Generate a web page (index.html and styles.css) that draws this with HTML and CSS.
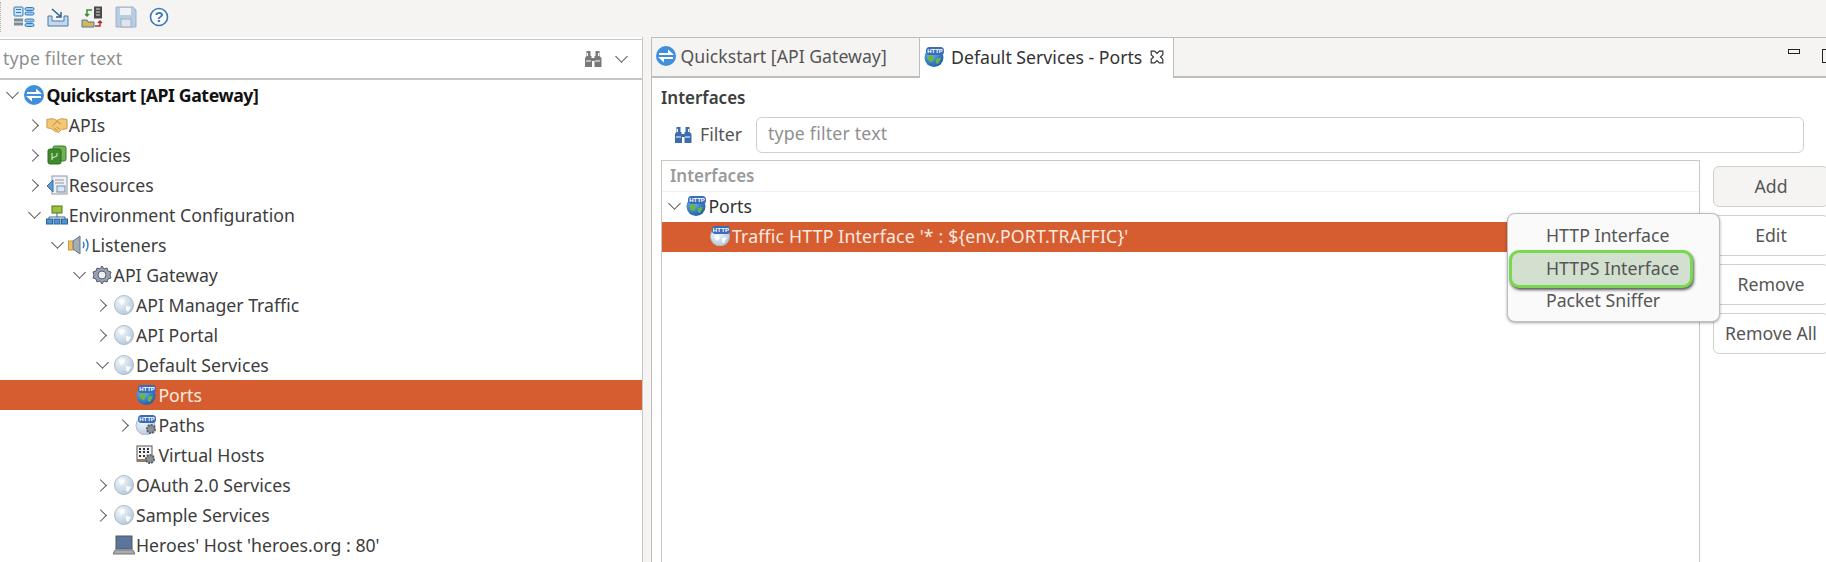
FILE: index.html
```html
<!DOCTYPE html>
<html lang="en">
<head>
    <meta charset="UTF-8">
    <title>Policy Studio - Default Services - Ports</title>
    <link rel="stylesheet" href="styles.css">
</head>
<body>
<svg class="sprites" width="0" height="0">
    <defs>
        <radialGradient id="gGrey" cx="35%" cy="30%" r="75%">
            <stop offset="0" stop-color="#f4f8fb"/>
            <stop offset="1" stop-color="#b4c8dc"/>
        </radialGradient>
        <radialGradient id="gBlue" cx="35%" cy="30%" r="75%">
            <stop offset="0" stop-color="#6cb8ee"/>
            <stop offset="1" stop-color="#1b5fa8"/>
        </radialGradient>
        <symbol id="i-qs" viewBox="0 0 20 20">
            <circle cx="10" cy="10" r="10" fill="#3f8fdc"/>
            <path d="M3 8h10M6.500 12H17" stroke="#fff" stroke-width="2"/>
            <path d="M12 3.500L18 9h-6zM8 16.500L2 11h6z" fill="#fff"/>
        </symbol>
        <symbol id="i-apis" viewBox="0 0 24 20">
            <path d="M1 4l6-1 5 2 5-2 6 1v10l-6 1-3 3-4-1-4-3-5-1z" fill="#f3c774" stroke="#c9963e"/>
            <path d="M7 11l5-5 4 3M9 13l3 3M12 12l3 3" fill="none" stroke="#b47f2c"/>
        </symbol>
        <symbol id="i-policies" viewBox="0 0 20 20">
            <rect x="6" y="1" width="13" height="15" rx="2" fill="#6cb356" stroke="#3b7f2b"/>
            <rect x="1" y="4" width="13" height="15" rx="2" fill="#3f8a2c" stroke="#2c6a1c"/>
            <path d="M5 8v7M10 8v3l-5 2" fill="none" stroke="#dff2d4"/>
        </symbol>
        <symbol id="i-resources" viewBox="0 0 22 20">
            <rect x="6" y="1" width="15" height="18" fill="#eef1f5" stroke="#8f98a3"/>
            <path d="M9 5h9M9 8h9" stroke="#8f98a3"/>
            <rect x="11" y="11" width="8" height="6" fill="#dbe7f3" stroke="#6f8fb3"/>
            <path d="M7 5L1 11l6 6z" fill="#5d9ad6" stroke="#3a6fa8"/>
        </symbol>
        <symbol id="i-env" viewBox="0 0 22 20">
            <rect x="6" y="1" width="10" height="7" fill="#9ac23c" stroke="#4f7a1d"/>
            <path d="M11 8v4M3 14v-2h16v2" fill="none" stroke="#39648f"/>
            <rect x="0.500" y="14" width="6" height="5" fill="#4f94d0" stroke="#2c6298"/>
            <rect x="8" y="14" width="6" height="5" fill="#4f94d0" stroke="#2c6298"/>
            <rect x="15.500" y="14" width="6" height="5" fill="#4f94d0" stroke="#2c6298"/>
        </symbol>
        <symbol id="i-listeners" viewBox="0 0 22 20">
            <rect x="0.500" y="6" width="5" height="9" fill="#f0c060" stroke="#c89a3c"/>
            <path d="M5 6l7-5v18l-7-5z" fill="#a4acb6" stroke="#687480"/>
            <path d="M15 7q2 3 0 6M18 4q4 6 0 12" fill="none" stroke="#3f7fc0" stroke-width="1.5"/>
        </symbol>
        <symbol id="i-gear" viewBox="0 0 20 20">
            <path d="M10 1l2 3 3-1 1 3 3 1-1 3 1 3-3 1-1 3-3-1-2 3-2-3-3 1-1-3-3-1 1-3-1-3 3-1 1-3 3 1z" fill="#98a0b4" stroke="#555c6c"/>
            <circle cx="10" cy="10" r="4" fill="#eef0f4" stroke="#555c6c"/>
        </symbol>
        <symbol id="i-globe" viewBox="0 0 20 20">
            <circle cx="10" cy="10" r="9.500" fill="url(#gGrey)" stroke="#aebccb"/>
            <path d="M5 5l5-1 1 3-4 3zM12 11l5 1-3 5-2-2z" fill="#fff"/>
        </symbol>
        <symbol id="i-http" viewBox="0 0 22 20">
            <circle cx="11" cy="10.500" r="9.500" fill="url(#gBlue)"/>
            <path d="M4 10l5-2 2 3-2 4-3-1zM13 12l5-1-3 6-2-1z" fill="#6fb53c"/>
            <rect x="3" y="0" width="18" height="8" rx="3.500" fill="#3a6db8"/>
            <text x="12" y="6.400" class="badge">HTTP</text>
        </symbol>
        <symbol id="i-http-grey" viewBox="0 0 22 20">
            <circle cx="11" cy="10.500" r="9.500" fill="url(#gGrey)" stroke="#aebccb"/>
            <path d="M5 11l4-2 2 3-3 3zM13 12l5-1-3 6-2-1z" fill="#fff"/>
            <rect x="3" y="0" width="18" height="8" rx="3.500" fill="#3a6db8"/>
            <text x="12" y="6.400" class="badge">HTTP</text>
        </symbol>
        <symbol id="i-paths" viewBox="0 0 22 20">
            <circle cx="10.500" cy="10.500" r="9.500" fill="url(#gGrey)" stroke="#aebccb"/>
            <rect x="3" y="0" width="18" height="8" rx="3.500" fill="#3a6db8"/>
            <text x="12" y="6.400" class="badge">HTTP</text>
            <circle cx="16" cy="14" r="4" fill="#8b9098" stroke="#5a5f66" stroke-width="2" stroke-dasharray="2 1"/>
        </symbol>
        <symbol id="i-vhosts" viewBox="0 0 20 20">
            <rect x="1" y="1" width="15" height="15" fill="#f4f4f4" stroke="#555"/>
            <path d="M3 4h2M7 4h2M11 4h2M3 7h2M7 7h2M11 7h2M3 11h2M7 11h2" stroke="#333" stroke-width="2"/>
            <rect x="1" y="14" width="10" height="3" fill="#8d8060"/>
            <circle cx="14" cy="14" r="4" fill="#8b9098" stroke="#5a5f66" stroke-width="2" stroke-dasharray="2 1"/>
        </symbol>
        <symbol id="i-host" viewBox="0 0 22 20">
            <rect x="3" y="1" width="16" height="13" fill="#5a769f" stroke="#555"/>
            <path d="M0 19l2-4h18l2 4z" fill="#a8acb0" stroke="#777"/>
        </symbol>
        <symbol id="i-bino" viewBox="0 0 20 18">
            <path d="M3.500 1h4v5h1v2h3V6h1V1h4v5l2 2v9h-7V11H9v6H2V8l1.500-2z" fill="currentColor"/>
            <path d="M3 11h5M12 11h5M4.500 3v3M15.500 3v3" stroke="#fff"/>
        </symbol>
    </defs>
</svg>

<div id="toolbar">
    <span class="grip"></span>
    <svg class="tool" width="22" height="22" viewBox="0 0 22 22">
        <rect x="1" y="1" width="9" height="9" rx="1" fill="#cfe2f5" stroke="#2f7fc0"/>
        <path d="M3 3.500h5M3 6.500h5" stroke="#2f7fc0"/>
        <rect x="12" y="1.500" width="9" height="3" rx="1.500" fill="#9cc8ec" stroke="#2f7fc0"/>
        <rect x="12" y="6" width="9" height="3" rx="1.500" fill="#9cc8ec" stroke="#2f7fc0"/>
        <path d="M1 14h9M1 18h9" stroke="#7d8c9a" stroke-width="3"/>
        <rect x="12" y="13" width="9" height="3" rx="1.500" fill="#9cc8ec" stroke="#2f7fc0"/>
        <rect x="12" y="17.500" width="9" height="3" rx="1.500" fill="#9cc8ec" stroke="#2f7fc0"/>
    </svg>
    <svg class="tool" width="22" height="22" viewBox="0 0 22 22">
        <path d="M1 10h4v5h12v-5h4v10H1z" fill="#c4d8ec" stroke="#4a78ab"/>
        <path d="M5 3l8 7M9 11h5V6" fill="none" stroke="#2f5f9a" stroke-width="1.5"/>
    </svg>
    <svg class="tool" width="22" height="22" viewBox="0 0 22 22">
        <rect x="13" y="0.500" width="8" height="12" fill="#4a4a4a"/>
        <path d="M15 3h4M15 6h4M15 9h4" stroke="#ddd"/>
        <path d="M1 14h5l1 2h6v5H1z" fill="#d9b650" stroke="#4a78ab"/>
        <path d="M11 4H6v6M4 8l2 2 2-2" fill="none" stroke="#3a8f2a" stroke-width="1.5"/>
        <path d="M14 20h5v-5M17 17l2-2 2 2" fill="none" stroke="#b03030" stroke-width="1.5"/>
    </svg>
    <svg class="tool" width="22" height="22" viewBox="0 0 22 22">
        <path d="M1 1h17l3 3v17H1z" fill="#b9cde2" stroke="#9fb2c6"/>
        <rect x="5" y="2" width="11" height="7" fill="#eef2f6"/>
        <rect x="6" y="13" width="10" height="8" fill="#dfe4ea" stroke="#9fb2c6"/>
    </svg>
    <svg class="tool" width="20" height="20" viewBox="0 0 20 20">
        <circle cx="10" cy="10" r="8.500" fill="#fff" stroke="#3c78b4" stroke-width="1.6"/>
        <text x="10" y="15" class="help">?</text>
    </svg>
</div>

<div id="workbench">
    <div id="navigator">
        <div id="search">
            <span class="placeholder">type filter text</span>
            <svg class="search-bino" width="20" height="18"><use href="#i-bino"/></svg>
            <span class="chev open search-chev"></span>
        </div>
        <ul id="tree">
            <li class="lvl0"><span class="chev open"></span><svg class="ico"><use href="#i-qs"/></svg><b>Quickstart [API Gateway]</b></li>
            <li class="lvl1"><span class="chev"></span><svg class="ico"><use href="#i-apis"/></svg>APIs</li>
            <li class="lvl1"><span class="chev"></span><svg class="ico"><use href="#i-policies"/></svg>Policies</li>
            <li class="lvl1"><span class="chev"></span><svg class="ico"><use href="#i-resources"/></svg>Resources</li>
            <li class="lvl1"><span class="chev open"></span><svg class="ico"><use href="#i-env"/></svg>Environment Configuration</li>
            <li class="lvl2"><span class="chev open"></span><svg class="ico"><use href="#i-listeners"/></svg>Listeners</li>
            <li class="lvl3"><span class="chev open"></span><svg class="ico"><use href="#i-gear"/></svg>API Gateway</li>
            <li class="lvl4"><span class="chev"></span><svg class="ico"><use href="#i-globe"/></svg>API Manager Traffic</li>
            <li class="lvl4"><span class="chev"></span><svg class="ico"><use href="#i-globe"/></svg>API Portal</li>
            <li class="lvl4"><span class="chev open"></span><svg class="ico"><use href="#i-globe"/></svg>Default Services</li>
            <li class="lvl5 selected"><span class="chev none"></span><svg class="ico"><use href="#i-http"/></svg>Ports</li>
            <li class="lvl5"><span class="chev"></span><svg class="ico"><use href="#i-paths"/></svg>Paths</li>
            <li class="lvl5"><span class="chev none"></span><svg class="ico"><use href="#i-vhosts"/></svg>Virtual Hosts</li>
            <li class="lvl4"><span class="chev"></span><svg class="ico"><use href="#i-globe"/></svg>OAuth 2.0 Services</li>
            <li class="lvl4"><span class="chev"></span><svg class="ico"><use href="#i-globe"/></svg>Sample Services</li>
            <li class="lvl4"><span class="chev none"></span><svg class="ico"><use href="#i-host"/></svg>Heroes' Host 'heroes.org : 80'</li>
        </ul>
    </div>

    <div id="editor">
        <div id="tabs">
            <div class="tab"><svg class="ico"><use href="#i-qs"/></svg>Quickstart [API Gateway]</div>
            <div class="tab active">
                <svg class="ico"><use href="#i-http"/></svg>Default Services - Ports
                <svg class="close" width="14" height="14" viewBox="0 0 12 12">
                    <path d="M1 1h3l2 2 2-2h3v3L9 6l2 2v3H8L6 9l-2 2H1V8l2-2-2-2z" fill="none" stroke="#333"/>
                </svg>
            </div>
            <div class="tab-actions">
                <span class="min"></span>
                <span class="max"></span>
            </div>
        </div>
        <div id="page">
            <h2>Interfaces</h2>
            <div id="filter">
                <svg class="filter-bino" width="20" height="18"><use href="#i-bino"/></svg>
                <span>Filter</span>
                <div class="input">type filter text</div>
            </div>
            <div id="body">
                <div id="table">
                    <div class="thead">Interfaces</div>
                    <div class="row"><span class="chev open"></span><svg class="ico"><use href="#i-http"/></svg>Ports</div>
                    <div class="row sub selected"><svg class="ico"><use href="#i-http-grey"/></svg>Traffic HTTP Interface '* : ${env.PORT.TRAFFIC}'</div>
                </div>
                <div id="buttons">
                    <button class="hover">Add</button>
                    <button>Edit</button>
                    <button>Remove</button>
                    <button>Remove All</button>
                </div>
            </div>
        </div>
    </div>
</div>

<ul id="menu">
    <li>HTTP Interface</li>
    <li class="current">HTTPS Interface</li>
    <li>Packet Sniffer</li>
</ul>
</body>
</html>
```

FILE: styles.css
```css
*{
    margin: 0;
    padding: 0;
    box-sizing: border-box;
}
ul{
    list-style: none;
}
html,body{
    height: 100%;
    overflow: hidden;
}
body{
    background-color: #f5f4f3;
    color: #3d3d3d;
    font-family: "Noto Sans", sans-serif;
    font-size: 17.7px;
    display: flex;
    flex-direction: column;
}
.sprites{
    position: absolute;
}
.badge{
    fill: #fff;
    font-family: "Liberation Sans", sans-serif;
    font-size: 6px;
    font-weight: bold;
    text-anchor: middle;
}
.help{
    fill: #3c78b4;
    font-family: "Liberation Sans", sans-serif;
    font-size: 15px;
    font-weight: bold;
    text-anchor: middle;
}

/* top toolbar */
#toolbar{
    height: 37px;
    flex: none;
    display: flex;
    align-items: center;
    gap: 12px;
    padding: 0 0 4px 0;
}
.grip{
    width: 1px;
    height: 30px;
    border-left: 1px dotted #b5b3ae;
}
.tool{
    flex: none;
}

/* chevrons are drawn from two borders */
.chev{
    flex: none;
    width: 22.4px;
    height: 20px;
    position: relative;
}
.chev::before{
    content: "";
    position: absolute;
    left: 5px;
    top: 6px;
    width: 8px;
    height: 8px;
    border-top: 1.5px solid #555;
    border-right: 1.5px solid #555;
    transform: rotate(45deg);
}
.chev.open::before{
    left: 7px;
    top: 3px;
    transform: rotate(135deg);
}
.chev.none::before{
    display: none;
}
.ico{
    flex: none;
    width: 22px;
    height: 20px;
    margin-right: 1px;
}

#workbench{
    flex: 1;
    min-height: 0;
    display: flex;
}

/* left side */
#navigator{
    width: 643px;
    flex: none;
    padding-top: 2px;
    display: flex;
    flex-direction: column;
    background-color: #fff;
    border-right: 1px solid #c8c8c6;
    box-shadow: 0 -2px 0 #f5f4f3;
}
#search{
    height: 41px;
    flex: none;
    display: flex;
    align-items: center;
    padding: 0 10px 0 3px;
    border-top: 1px solid #c8c8c6;
    border-bottom: 2px solid #c8c8c6;
}
.placeholder{
    flex: 1;
    padding-bottom: 2px;
    color: #8f8f8f;
    letter-spacing: 0.2px;
}
.search-bino{
    color: #77797a;
}
.search-chev{
    margin-left: 7px;
    width: 22px;
}
#tree li{
    height: 30px;
    display: flex;
    align-items: center;
    white-space: nowrap;
}
#tree b{
    color: #111;
    font-weight: 700;
    letter-spacing: -0.4px;
}
#tree .selected, #table .selected{
    background-color: #d65d30;
    color: #fbe9e0;
}
.lvl0{ padding-left: 1px; }
.lvl1{ padding-left: 23.4px; }
.lvl2{ padding-left: 45.8px; }
.lvl3{ padding-left: 68.2px; }
.lvl4{ padding-left: 90.6px; }
.lvl5{ padding-left: 113px; }

/* right side */
#editor{
    flex: 1;
    min-width: 0;
    margin-left: 8px;
    display: flex;
    flex-direction: column;
    border-left: 1px solid #bdbdbb;
    background-color: #fff;
}
#tabs{
    height: 41px;
    flex: none;
    display: flex;
    background-color: #f5f4f3;
    border-top: 1px solid #bdbdbb;
    border-bottom: 2px solid #bdbdbb;
}
.tab{
    width: 267px;
    display: flex;
    align-items: center;
    padding: 0 0 2px 3px;
    color: #555;
    white-space: nowrap;
    gap: 2.5px;
}
.tab.active{
    width: 255px;
    margin-bottom: -2px;
    padding: 0 0 2px 3px;
    gap: 5px;
    background-color: #fff;
    color: #333;
    border-left: 1px solid #bdbdbb;
    border-right: 1px solid #bdbdbb;
}
.close{
    margin-left: 3px;
}
.tab-actions{
    flex: 1;
    display: flex;
    justify-content: flex-end;
    gap: 22px;
    padding-top: 11px;
}
.min{
    width: 12px;
    height: 5px;
    border: 1.5px solid #222;
}
.max{
    width: 12px;
    height: 14px;
    margin-right: -8px;
    border: 1.5px solid #222;
}
#page{
    flex: 1;
    min-height: 0;
    display: flex;
    flex-direction: column;
    padding: 7px 22px 0 9px;
}
h2{
    height: 26px;
    font-size: 17px;
    font-weight: 600;
    line-height: 26px;
}
#filter{
    display: flex;
    align-items: center;
    height: 36px;
    margin-top: 6px;
    padding-left: 12px;
    color: #555;
}
#filter span{
    padding-bottom: 2px;
}
.filter-bino{
    color: #3c6cae;
    margin-right: 7px;
}
.input{
    flex: 1;
    height: 36px;
    margin-left: 14px;
    padding-left: 11px;
    line-height: 31px;
    color: #8f8f8f;
    letter-spacing: 0.2px;
    border: 1px solid #cfcfcd;
    border-radius: 6px;
}
#body{
    flex: 1;
    min-height: 0;
    display: flex;
    margin-top: 7px;
}
#table{
    width: 1039px;
    flex: none;
    border: 1px solid #c8c8c6;
    border-bottom: 0;
}
.thead{
    height: 31px;
    padding-left: 8px;
    font-size: 17px;
    line-height: 30px;
    color: #9a9a9a;
    font-weight: 600;
    border-bottom: 1px solid #f0f0f0;
}
.row{
    height: 30px;
    display: flex;
    align-items: center;
    padding: 0 0 2px 1px;
    color: #333;
    white-space: nowrap;
}
.row.sub{
    padding-left: 47px;
    letter-spacing: 0.17px;
}
#buttons{
    width: 116px;
    flex: none;
    margin: 6px -22px 0 13px;
    display: flex;
    flex-direction: column;
    gap: 8px;
}
#buttons button{
    width: 116px;
    height: 41px;
    padding-bottom: 2px;
    font: inherit;
    color: #555;
    background-color: #fff;
    border: 1px solid #d0d0ce;
    border-radius: 6px;
}
#buttons .hover{
    background-color: #f5f4f3;
}

/* popup menu */
#menu{
    position: absolute;
    left: 1507px;
    top: 213px;
    width: 213px;
    height: 109px;
    padding: 6px 0 0 4px;
    background-color: #fafafa;
    color: #555;
    border: 1px solid #bdbdbd;
    border-radius: 8px;
    box-shadow: 0 1px 3px rgba(0,0,0,.35);
}
#menu li{
    width: 178px;
    height: 32.5px;
    padding-left: 34px;
    line-height: 30px;
    white-space: nowrap;
}
#menu .current{
    background-color: #d3dfcf;
    border-radius: 7px;
    box-shadow: 0 0 0 3px #78d850, 1px 2px 3px 3px rgba(0,0,0,.65);
}
```
